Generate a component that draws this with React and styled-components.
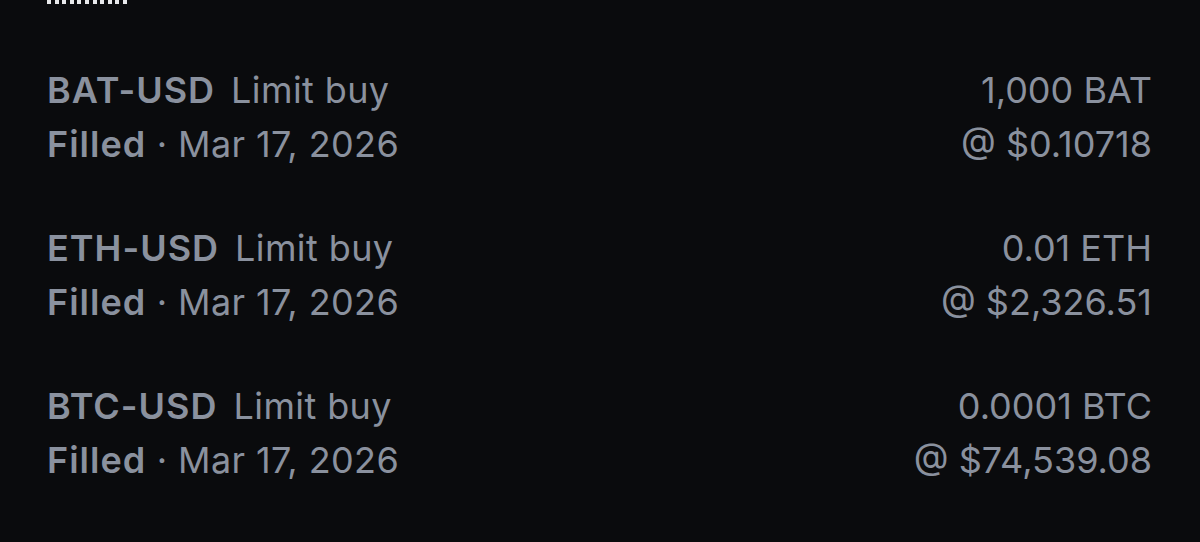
import React from "react";
import styled, { createGlobalStyle } from "styled-components";

const Global = createGlobalStyle`
	html, body {
		margin: 0;
		background: #0a0b0d;
	}
	body {
		font-family: Inter, "Noto Sans", sans-serif;
		-webkit-font-smoothing: antialiased;
	}
`

const Page = styled.div`
	width: 1200px;
	height: 542px;
	background: #0a0b0d;
	padding: 0 48px 0 47px;
	box-sizing: border-box;
	overflow: hidden;
`

const Dots = styled.div`
	width: 84px;
	height: 4px;
	background-image: repeating-linear-gradient(90deg, #e8e9eb 0 4px, transparent 4px 7.6px);
`

const List = styled.div`
	display: flex;
	flex-direction: column;
	gap: 50px;
	padding-top: 59px;
`

const Row = styled.div`
	display: flex;
	justify-content: space-between;
	align-items: flex-start;
`

const Col = styled.div`
	display: flex;
	flex-direction: column;
	align-items: ${p => (p.$right ? "flex-end" : "flex-start")};
`

const Line = styled.div`
	font-size: 36px;
	line-height: 54px;
	color: #8a919e;
	white-space: nowrap;
	letter-spacing: ${p => (p.$right ? "0" : "0.4px")};
`

const Strong = styled.span`
	font-weight: 600;
	letter-spacing: 1px;
	margin-right: ${p => p.$gap || 0}px;
`

const orders = [
	{ pair: "BAT-USD", amount: "1,000 BAT", price: "@ $0.10718" },
	{ pair: "ETH-USD", amount: "0.01 ETH", price: "@ $2,326.51" },
	{ pair: "BTC-USD", amount: "0.0001 BTC", price: "@ $74,539.08" },
]

export default function App() {
	return (
		<Page>
			<Global />
			<Dots />
			<List>
				{orders.map(o => (
					<Row key={o.pair}>
						<Col>
							<Line><Strong $gap={16}>{o.pair}</Strong>Limit buy</Line>
							<Line><Strong>Filled</Strong> · Mar 17, 2026</Line>
						</Col>
						<Col $right>
							<Line $right>{o.amount}</Line>
							<Line $right>{o.price}</Line>
						</Col>
					</Row>
				))}
			</List>
		</Page>
	)
}
